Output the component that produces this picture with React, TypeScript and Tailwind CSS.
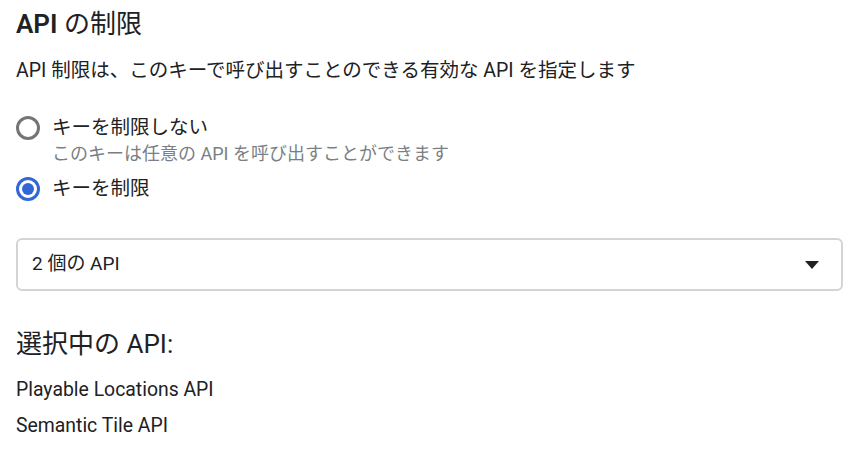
import { useState } from 'react'

const font = {
  fontFamily: 'Roboto, "Noto Sans CJK JP", "Liberation Sans", sans-serif',
}

function Radio({ checked }: { checked: boolean }) {
  return (
    <span
      className={
        checked
          ? 'flex h-[24px] w-[24px] shrink-0 items-center justify-center rounded-full border-[3px] border-[#3367d6]'
          : 'flex h-[24px] w-[24px] shrink-0 items-center justify-center rounded-full border-[3px] border-[#757575]'
      }
    >
      {checked && <span className="h-[12px] w-[12px] rounded-full bg-[#3367d6]" />}
    </span>
  )
}

export default function App() {
  const [restricted, setRestricted] = useState(true)
  const selected = ['Playable Locations API', 'Semantic Tile API']

  return (
    <div className="min-h-[451px] w-[867px] bg-white px-4 text-[#202124]" style={font}>
      <h2 className="pt-[8px] text-[26px] leading-[32px] font-normal">
        <span className="font-semibold">API</span> の制限
      </h2>
      <p className="mt-[17px] text-[19.5px] leading-[28px]">
        API 制限は、このキーで呼び出すことのできる有効な API を指定します
      </p>

      <div className="mt-[29px] flex flex-col">
        <button className="flex items-center gap-[12px] text-left" onClick={() => setRestricted(false)}>
          <Radio checked={!restricted} />
          <span className="text-[19.5px] leading-[28px]">キーを制限しない</span>
        </button>
        <span className="ml-[36px] text-[18px] leading-[24px] text-[#7b7f84]">
          このキーは任意の API を呼び出すことができます
        </span>
        <button className="mt-[9px] flex items-center gap-[12px] text-left" onClick={() => setRestricted(true)}>
          <Radio checked={restricted} />
          <span className="text-[19.5px] leading-[28px]">キーを制限</span>
        </button>
      </div>

      <div className="mt-[35px] flex h-[53px] w-[827px] items-center justify-between rounded-[6px] border-2 border-[#d4d4d4] pr-[22px] pl-[14px]">
        <span className="text-[19px]">2 個の API</span>
        <svg width="14" height="8" viewBox="0 0 14 8">
          <path d="M0 0h14L7 8z" fill="#202124" />
        </svg>
      </div>

      <h3 className="mt-[37px] text-[26px] leading-[32px] font-normal">選択中の API:</h3>
      <ul className="mt-[17px] flex flex-col gap-[11px]">
        {selected.map((api) => (
          <li key={api} className="text-[19.4px] leading-[25px]">
            {api}
          </li>
        ))}
      </ul>
    </div>
  )
}
